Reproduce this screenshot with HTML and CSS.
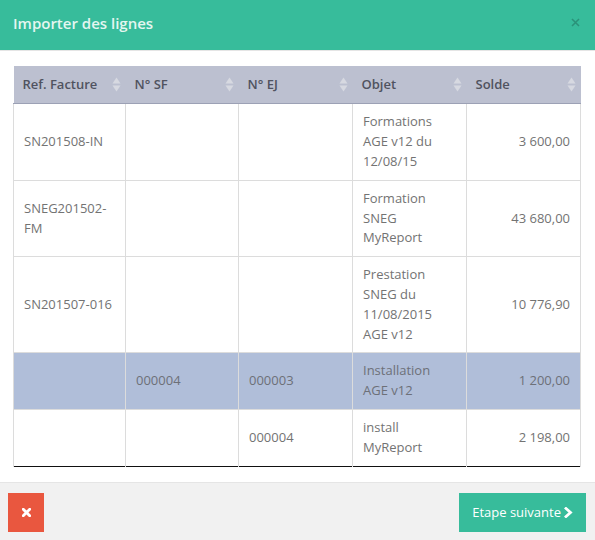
FILE: index.html
```html
<!DOCTYPE html>
<html lang="fr">
<head>
<meta charset="utf-8">
<title>Importer des lignes</title>
<link rel="stylesheet" href="styles.css">
</head>
<body>
<div class="modal">
  <div class="modal-header">
    <h4 class="modal-title">Importer des lignes</h4>
    <button class="close" type="button" aria-label="Fermer">
      <svg width="9" height="9" viewBox="0 0 9 9"><path d="M1 1L8 8M8 1L1 8" stroke="currentColor" stroke-width="1.6" fill="none"/></svg>
    </button>
  </div>
  <div class="modal-body">
    <table class="grid">
      <colgroup>
        <col class="c1"><col class="c2"><col class="c3"><col class="c4"><col class="c5">
      </colgroup>
      <thead>
        <tr>
          <th><div class="th-in"><span>Ref. Facture</span><svg class="sort" width="9" height="15" viewBox="0 0 9 15"><polygon points="0.5,6.5 4.5,0.5 8.5,6.5"/><polygon points="0.5,8.5 4.5,14.5 8.5,8.5"/></svg></div></th>
          <th><div class="th-in"><span>N° SF</span><svg class="sort" width="9" height="15" viewBox="0 0 9 15"><polygon points="0.5,6.5 4.5,0.5 8.5,6.5"/><polygon points="0.5,8.5 4.5,14.5 8.5,8.5"/></svg></div></th>
          <th><div class="th-in"><span>N° EJ</span><svg class="sort" width="9" height="15" viewBox="0 0 9 15"><polygon points="0.5,6.5 4.5,0.5 8.5,6.5"/><polygon points="0.5,8.5 4.5,14.5 8.5,8.5"/></svg></div></th>
          <th><div class="th-in"><span>Objet</span><svg class="sort" width="9" height="15" viewBox="0 0 9 15"><polygon points="0.5,6.5 4.5,0.5 8.5,6.5"/><polygon points="0.5,8.5 4.5,14.5 8.5,8.5"/></svg></div></th>
          <th><div class="th-in"><span>Solde</span><svg class="sort" width="9" height="15" viewBox="0 0 9 15"><polygon points="0.5,6.5 4.5,0.5 8.5,6.5"/><polygon points="0.5,8.5 4.5,14.5 8.5,8.5"/></svg></div></th>
        </tr>
      </thead>
      <tbody>
        <tr>
          <td>SN201508-IN</td><td></td><td></td>
          <td>Formations AGE v12 du 12/08/15</td>
          <td class="num">3 600,00</td>
        </tr>
        <tr>
          <td>SNEG201502-FM</td><td></td><td></td>
          <td>Formation SNEG MyReport</td>
          <td class="num">43 680,00</td>
        </tr>
        <tr>
          <td>SN201507-016</td><td></td><td></td>
          <td>Prestation SNEG du 11/08/2015 AGE v12</td>
          <td class="num">10 776,90</td>
        </tr>
        <tr class="selected">
          <td></td><td>000004</td><td>000003</td>
          <td>Installation AGE v12</td>
          <td class="num">1 200,00</td>
        </tr>
        <tr>
          <td></td><td></td><td>000004</td>
          <td>install MyReport</td>
          <td class="num">2 198,00</td>
        </tr>
      </tbody>
    </table>
  </div>
  <div class="modal-footer">
    <button class="btn btn-danger" type="button" aria-label="Annuler">
      <svg width="9" height="9" viewBox="0 0 9 9"><path d="M1.3 1.3L7.7 7.7M7.7 1.3L1.3 7.7" stroke="#fff" stroke-width="2.8" stroke-linecap="square" fill="none"/></svg>
    </button>
    <button class="btn btn-success" type="button">
      <span>Etape suivante</span>
      <svg width="9" height="11" viewBox="0 0 9 11"><polyline points="2,1.5 6.5,5.5 2,9.5" stroke="#fff" stroke-width="2.8" stroke-linecap="square" fill="none"/></svg>
    </button>
  </div>
</div>
</body>
</html>
```

FILE: styles.css
```css
* { box-sizing: border-box; }
html, body {
  margin: 0;
  padding: 0;
  background: #fff;
}
body {
  font-family: "Open Sans", "Liberation Sans", sans-serif;
  font-size: 13px;
  color: #737373;
}
.modal {
  width: 595px;
  height: 540px;
  display: flex;
  flex-direction: column;
  background: #fff;
}
.modal-header {
  height: 52px;
  background: #37bc9b;
  border-bottom: 1px solid #e5e5e5;
  display: flex;
  align-items: center;
  justify-content: space-between;
  padding: 0 15px 4px 13px;
}
.modal-title {
  margin: 0;
  font-size: 15px;
  font-weight: 600;
  line-height: 20px;
  color: #e4f6f0;
}
.close {
  border: 0;
  background: transparent;
  padding: 0;
  margin: 0;
  color: rgba(0, 0, 0, 0.22);
  display: flex;
  margin-top: -2px;
}
.modal-body {
  flex: 1;
  padding: 15px 15px 15px 13px;
}
.grid {
  width: 567px;
  border-collapse: collapse;
  table-layout: fixed;
  border-bottom: 1px solid #111;
}
.c1 { width: 112px; }
.c2 { width: 113px; }
.c3 { width: 114px; }
.c4 { width: 114px; }
.c5 { width: 114px; }
.grid th {
  background: #bcc0d0;
  color: #50535f;
  font-weight: 600;
  text-align: left;
  padding: 8px 5px 8px 9px;
  line-height: 21px;
  border-bottom: 1px solid #9ca1b5;
}
.th-in {
  display: flex;
  align-items: center;
  justify-content: space-between;
}
.sort {
  fill: #d7d9e1;
  flex: none;
}
.grid td {
  border: 1px solid #dcdcdc;
  padding: 8px 10px;
  line-height: 19.8px;
  vertical-align: middle;
}
.grid tbody tr:first-child td { border-top: 0; }
.grid tbody tr:last-child td { border-bottom: 0; }
.grid td.num { text-align: right; }
.grid tr.selected td {
  background: #b0bed9;
  color: #6d7078;
}
.modal-footer {
  height: 59px;
  background: #f1f1f1;
  border-top: 1px solid #e5e5e5;
  display: flex;
  justify-content: space-between;
  align-items: flex-start;
  padding: 10px 9px 0 8px;
}
.btn {
  border: 0;
  margin: 0;
  height: 39px;
  font-family: inherit;
  font-size: 13px;
  color: #fff;
  display: flex;
  align-items: center;
  white-space: nowrap;
  cursor: pointer;
}
.btn-danger {
  width: 36px;
  background: #e9573f;
  justify-content: center;
  padding: 0 0 0 1px;
}
.btn-success {
  background: #37bc9b;
  padding: 0 13px;
  gap: 3px;
  font-weight: 400;
}
```
